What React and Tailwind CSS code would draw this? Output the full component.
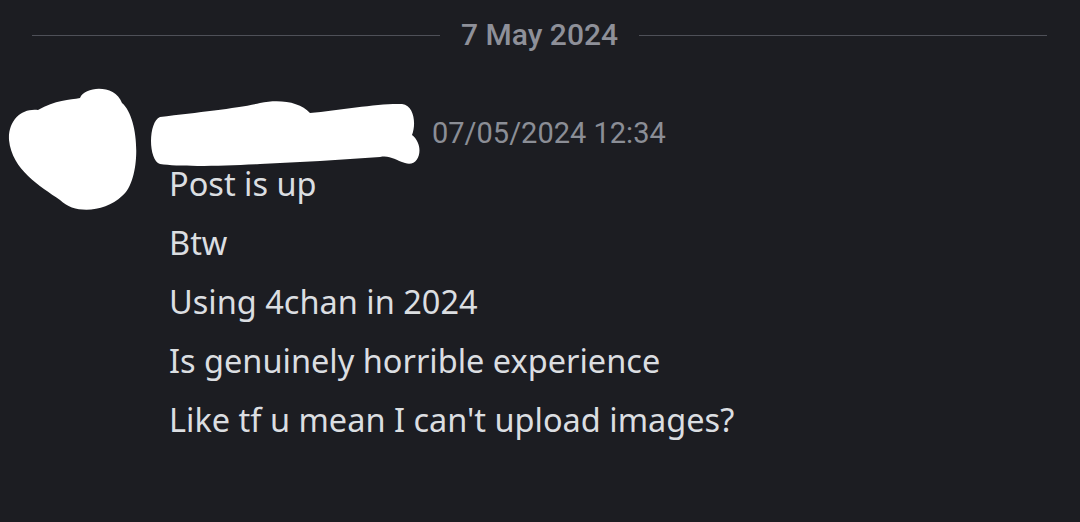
import React from "react";

const messages = [
  "Post is up",
  "Btw",
  "Using 4chan in 2024",
  "Is genuinely horrible experience",
  "Like tf u mean I can't upload images?",
];

function AvatarBlob() {
  return (
    <svg width="140" height="135" viewBox="0 80 140 135" className="shrink-0">
      <path
        fill="#ffffff"
        d="M38 110 C55 100 70 100 80 98 C85 86 115 84 122 103 C140 118 142 180 122 196 C105 212 75 215 60 200 C40 186 12 170 9 140 C8 120 22 108 38 110 Z"
      />
    </svg>
  );
}

function NameBlob() {
  return (
    <svg width="275" height="70" viewBox="148 98 275 70" className="shrink-0 -mb-[13px]">
      <path
        fill="#ffffff"
        d="M160 117 C200 112 240 108 260 103 C280 99 300 102 310 113 C340 110 380 103 402 104 C415 106 416 125 412 135 C425 145 420 168 405 163 C395 160 390 155 380 157 C340 160 300 162 260 164 C220 166 180 167 160 164 C148 160 148 122 160 117 Z"
      />
    </svg>
  );
}

export default function App() {
  return (
    <div className="w-[1080px] h-[522px] bg-[#1c1d22] overflow-hidden" style={{ fontFamily: '"Noto Sans", sans-serif' }}>
      <div className="flex items-center pl-[32px] pr-[33px] pt-[15px] gap-[21px]">
        <div className="flex-1 h-px bg-[#4e5058]" />
        <span className="text-[30px] leading-[40px] font-medium text-[#8e9099] font-['Roboto',sans-serif]">7 May 2024</span>
        <div className="flex-1 h-px bg-[#4e5058]" />
      </div>
      <div className="flex items-start mt-[25px]">
        <AvatarBlob />
        <div className="flex flex-col pl-[8px] pt-[18px]">
          <div className="flex items-center">
            <NameBlob />
            <span className="ml-[9px] mt-[14px] text-[29px] text-[#8b8e96] font-['Roboto',sans-serif]">07/05/2024 12:34</span>
          </div>
          <div className="flex flex-col pl-[21px] -mt-[2px]">
            {messages.map((m) => (
              <p key={m} className="text-[32.5px] leading-[59px] text-[#dbdee1]">{m}</p>
            ))}
          </div>
        </div>
      </div>
    </div>
  );
}
